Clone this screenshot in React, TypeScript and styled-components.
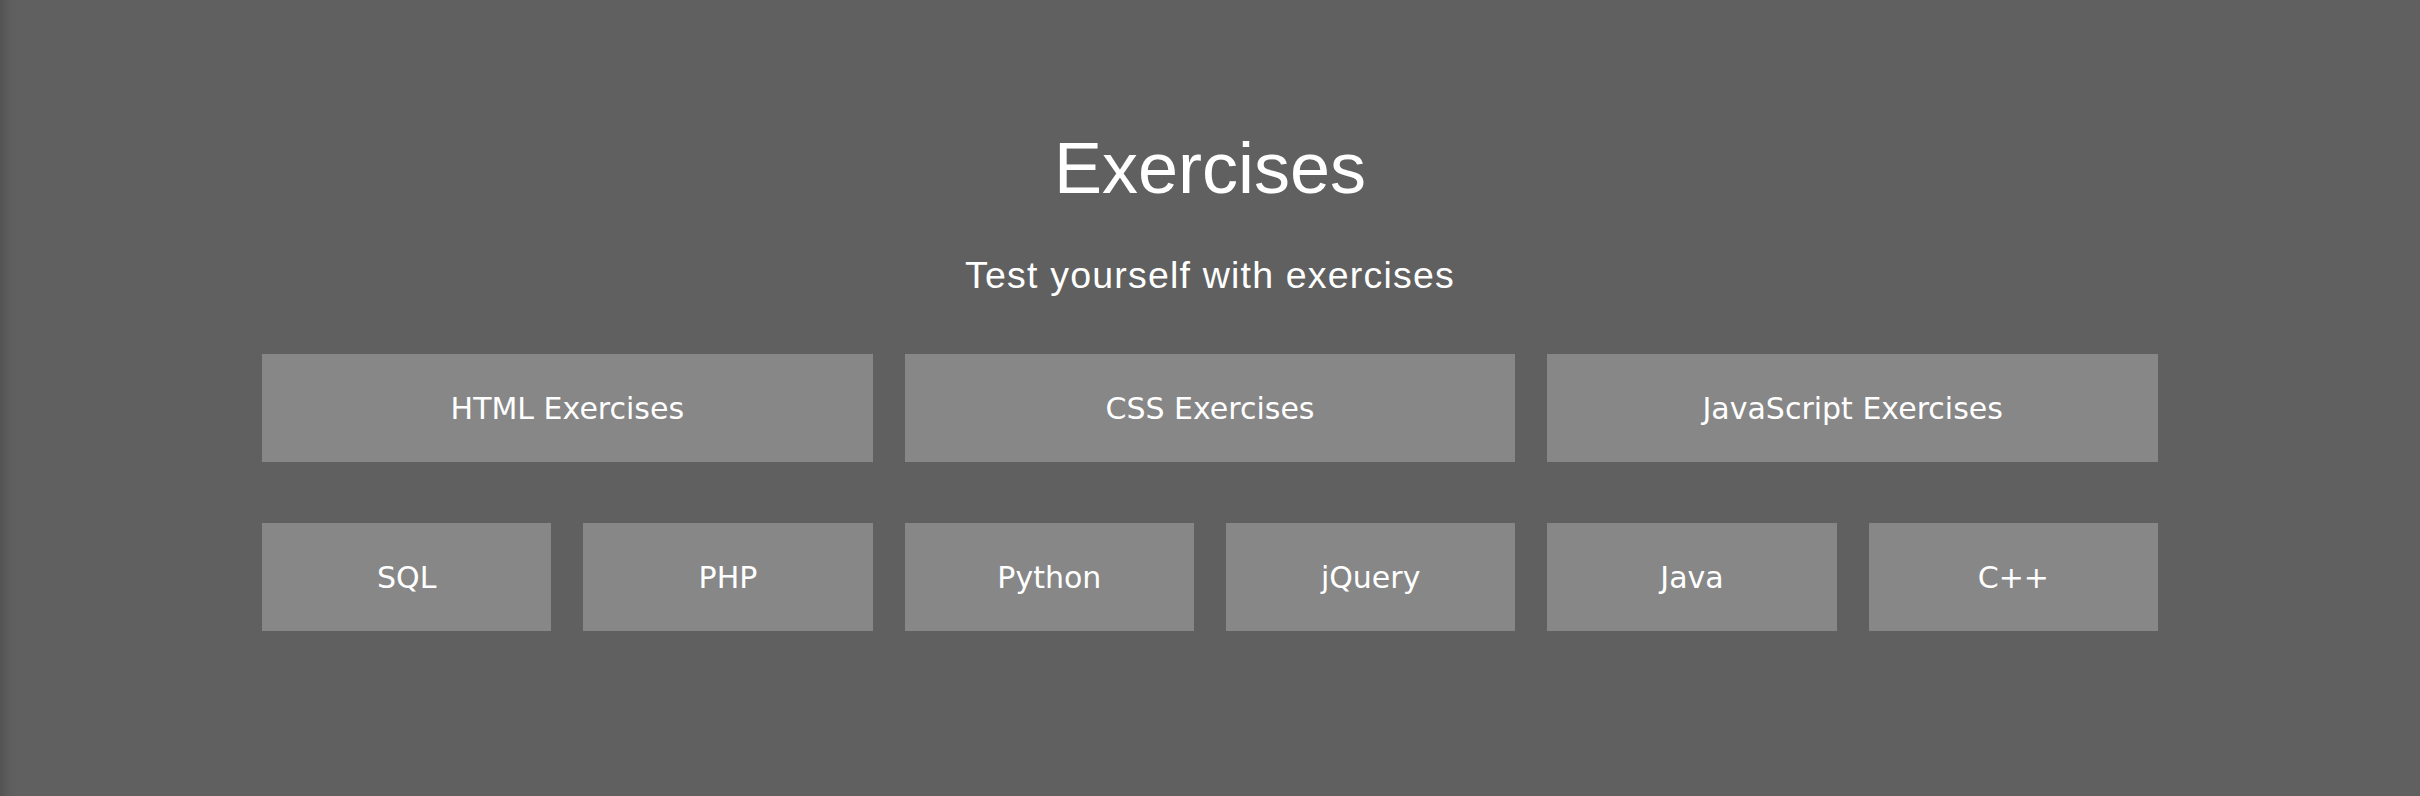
import React from "react";
import styled, { createGlobalStyle } from "styled-components";

const GlobalStyle = createGlobalStyle`
  html, body {
    margin: 0;
    padding: 0;
  }
  body {
    background: #606060;
    font-family: "Liberation Sans", Arial, Helvetica, sans-serif;
    color: #ffffff;
  }
`;

const Page = styled.main`
  box-sizing: border-box;
  width: 100%;
  min-height: 796px;
  padding-top: 125px;
  background: linear-gradient(to right, #535353 0px, #5a5a5a 6px, #5e5e5e 11px, #606060 17px);
  display: flex;
  flex-direction: column;
  align-items: center;
`;

const Title = styled.h1`
  margin: 0;
  font-family: "Liberation Sans", Arial, Helvetica, sans-serif;
  font-weight: 400;
  font-size: 72px;
  line-height: 86px;
  color: #ffffff;
  text-align: center;
`;

const Subtitle = styled.p`
  margin: 42px 0 0;
  font-family: "Liberation Sans", Arial, Helvetica, sans-serif;
  font-weight: 400;
  font-size: 37.5px;
  line-height: 44px;
  letter-spacing: 1.2px;
  color: #ffffff;
  text-align: center;
`;

const Grid = styled.div`
  margin-top: 57px;
  width: 1896px;
  display: grid;
  grid-template-columns: repeat(6, 1fr);
  grid-auto-rows: 108px;
  column-gap: 32px;
  row-gap: 61px;
`;

const Tile = styled.a<{ $wide?: boolean }>`
  grid-column: span ${(p) => (p.$wide ? 2 : 1)};
  display: flex;
  align-items: center;
  justify-content: center;
  padding-top: 2px;
  background: #878787;
  color: #ffffff;
  text-decoration: none;
  font-family: "DejaVu Sans", Verdana, sans-serif;
  font-size: 30px;
  line-height: 1;
`;

const wide = ["HTML Exercises", "CSS Exercises", "JavaScript Exercises"];
const narrow = ["SQL", "PHP", "Python", "jQuery", "Java", "C++"];

export default function App() {
  return (
    <>
      <GlobalStyle />
      <Page>
        <Title>Exercises</Title>
        <Subtitle>Test yourself with exercises</Subtitle>
        <Grid>
          {wide.map((t) => (
            <Tile key={t} $wide href="#">
              {t}
            </Tile>
          ))}
          {narrow.map((t) => (
            <Tile key={t} href="#">
              {t}
            </Tile>
          ))}
        </Grid>
      </Page>
    </>
  );
}
